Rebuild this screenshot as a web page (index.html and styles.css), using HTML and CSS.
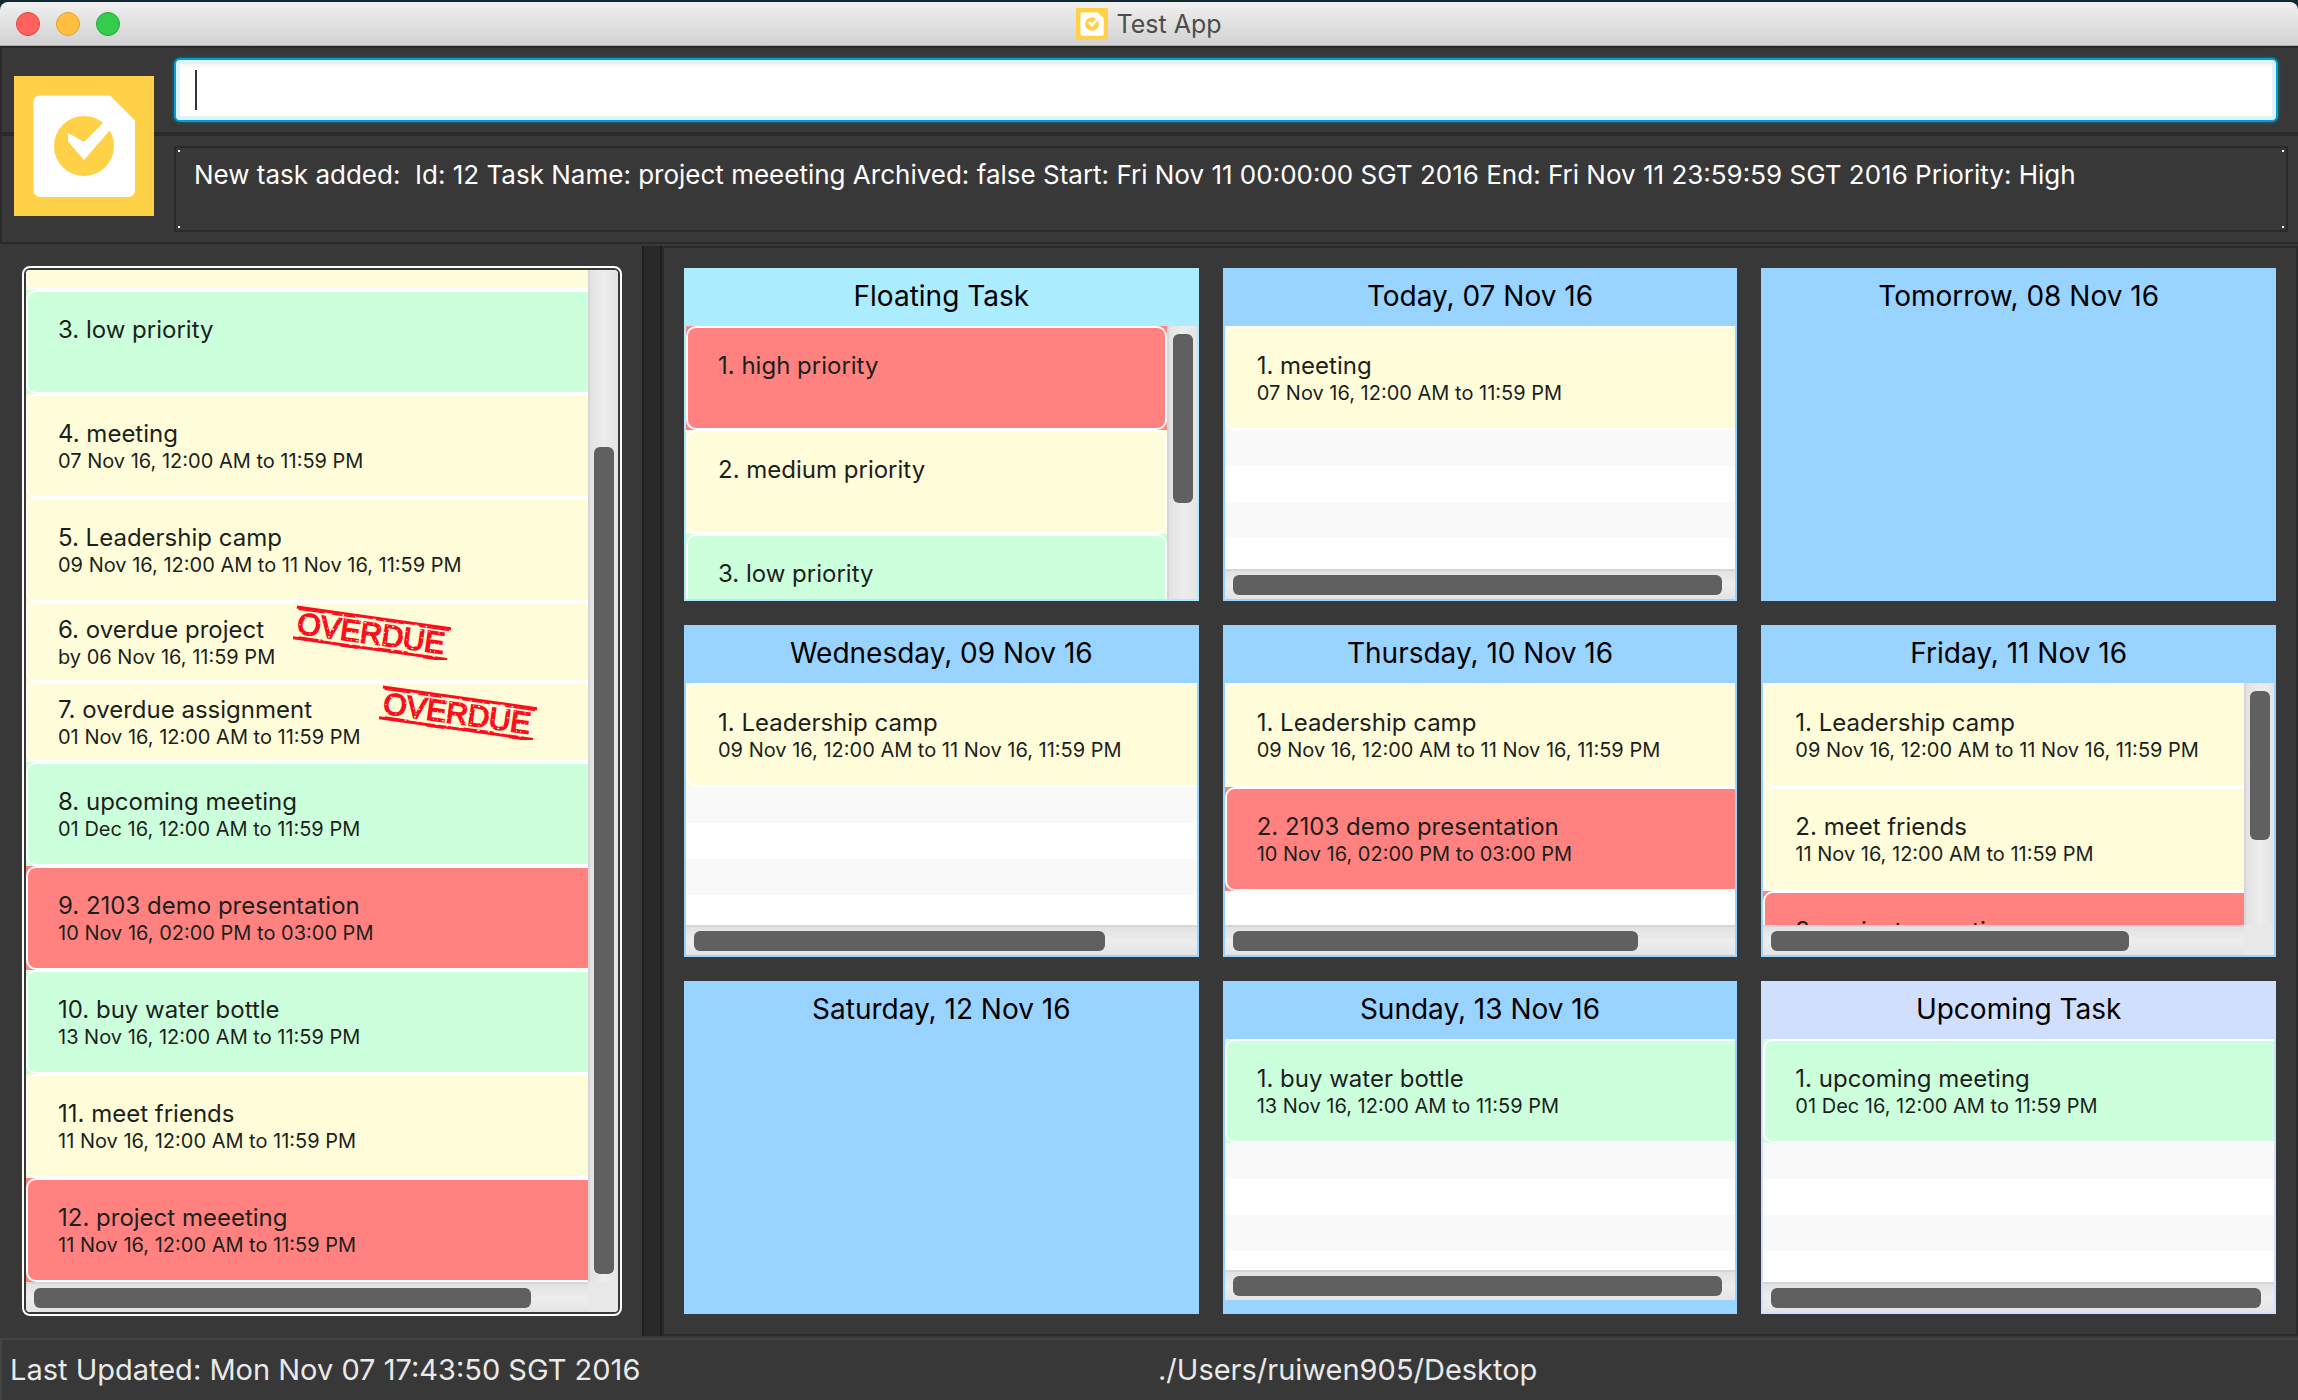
FILE: index.html
```html
<!DOCTYPE html>
<html lang="en">
<head>
<meta charset="utf-8">
<title>Test App</title>
<link rel="stylesheet" href="styles.css">
</head>
<body>
<svg class="defs" aria-hidden="true">
  <symbol id="logo" viewBox="0 0 140 140">
    <rect width="140" height="140" fill="#ffd147"/>
    <path fill="#fff" d="M26 19.5H96L121 44.5V113.500Q121 121 113.500 121H27Q19.500 121 19.500 113.500V26Q19.500 19.500 26 19.500Z"/>
    <circle cx="70" cy="70" r="30" fill="#ffd147"/>
    <path fill="#fff" d="M54 57 70 66 92 44 97 53 70 84 54 65.500Z"/>
  </symbol>
  <symbol id="stamp" viewBox="0 0 158 56">
    <g transform="rotate(8 4 2)" fill="none" stroke="#fb0d1b">
      <path d="M4 3H160" stroke-width="3"/>
      <path d="M6 5H32M40 5H64M84 4.500H112M128 5H158" stroke-width="1.500"/>
      <path d="M4 34H160" stroke-width="3"/>
      <path d="M10 32.500H34M52 35.500H70M90 32.500H120M136 35.500H159" stroke-width="1.500"/>
      <text x="7" y="29" font-family="Liberation Sans, Arial, sans-serif" font-size="30" fill="#fb0d1b" stroke-width="1.600">OVERDUE</text>
      <path stroke="#fffdd9" stroke-width="1.200" stroke-dasharray="1 4 2 7 1 9 1 3" d="M8 12H154M14 16H150M9 20H152M16 25H156M6 28H150M40 9H150"/>
      <path stroke="#fffdd9" stroke-width="1.200" stroke-dasharray="2 11 1 17 3 8" d="M50 4.500H140M30 32.500H150"/>
    </g>
  </symbol>
</svg>

<header class="titlebar">
  <div class="lights">
    <button class="light light-close" aria-label="Close"></button>
    <button class="light light-min" aria-label="Minimize"></button>
    <button class="light light-zoom" aria-label="Zoom"></button>
  </div>
  <h1 class="title"><svg class="title-icon" aria-hidden="true"><use href="#logo"/></svg>Test App</h1>
</header>

<section class="top">
  <svg class="logo" role="img" aria-label="Logo"><use href="#logo"/></svg>
  <div class="bar command-bar">
    <input class="command" type="text" aria-label="Command">
    <span class="caret"></span>
  </div>
  <div class="bar result-bar">
    <textarea class="result" readonly aria-label="Result">New task added:&nbsp; Id: 12 Task Name: project meeeting Archived: false Start: Fri Nov 11 00:00:00 SGT 2016 End: Fri Nov 11 23:59:59 SGT 2016 Priority: High</textarea>
  </div>
</section>

<main class="split">
  <section class="side">
    <div class="side-frame">
      <div class="scroller both">
        <ul class="list at-end">
          <li class="task medium"><div class="cell"></div></li>
          <li class="task low"><div class="cell"><div class="text"><p class="name">3. low priority</p><p class="when"></p></div></div></li>
          <li class="task medium"><div class="cell"><div class="text"><p class="name">4. meeting</p><p class="when">07 Nov 16, 12:00 AM to 11:59 PM</p></div></div></li>
          <li class="task medium"><div class="cell"><div class="text"><p class="name">5. Leadership camp</p><p class="when">09 Nov 16, 12:00 AM to 11 Nov 16, 11:59 PM</p></div></div></li>
          <li class="task medium overdue"><div class="cell"><div class="text"><p class="name">6. overdue project</p><p class="when">by 06 Nov 16, 11:59 PM</p></div><svg class="stamp"><use href="#stamp"/></svg></div></li>
          <li class="task medium overdue"><div class="cell"><div class="text"><p class="name">7. overdue assignment</p><p class="when">01 Nov 16, 12:00 AM to 11:59 PM</p></div><svg class="stamp"><use href="#stamp"/></svg></div></li>
          <li class="task low"><div class="cell"><div class="text"><p class="name">8. upcoming meeting</p><p class="when">01 Dec 16, 12:00 AM to 11:59 PM</p></div></div></li>
          <li class="task high"><div class="cell"><div class="text"><p class="name">9. 2103 demo presentation</p><p class="when">10 Nov 16, 02:00 PM to 03:00 PM</p></div></div></li>
          <li class="task low"><div class="cell"><div class="text"><p class="name">10. buy water bottle</p><p class="when">13 Nov 16, 12:00 AM to 11:59 PM</p></div></div></li>
          <li class="task medium"><div class="cell"><div class="text"><p class="name">11. meet friends</p><p class="when">11 Nov 16, 12:00 AM to 11:59 PM</p></div></div></li>
          <li class="task high"><div class="cell"><div class="text"><p class="name">12. project meeeting</p><p class="when">11 Nov 16, 12:00 AM to 11:59 PM</p></div></div></li>
        </ul>
        <div class="vbar end"><div class="thumb" style="height:83%"></div></div>
        <div class="hbar"><div class="thumb" style="width:91%"></div></div>
        <div class="corner"></div>
      </div>
    </div>
  </section>

  <div class="divider"></div>

  <section class="board">
    <article class="card floating">
      <h2 class="day">Floating Task</h2>
      <div class="scroller vertical">
        <ul class="list fit">
          <li class="task high"><div class="cell"><div class="text"><p class="name">1. high priority</p><p class="when"></p></div></div></li>
          <li class="task medium"><div class="cell"><div class="text"><p class="name">2. medium priority</p><p class="when"></p></div></div></li>
          <li class="task low"><div class="cell"><div class="text"><p class="name">3. low priority</p><p class="when"></p></div></div></li>
        </ul>
        <div class="vbar"><div class="thumb" style="height:66%"></div></div>
      </div>
    </article>

    <article class="card">
      <h2 class="day">Today, 07 Nov 16</h2>
      <div class="scroller horizontal">
        <ul class="list">
          <li class="task medium"><div class="cell"><div class="text"><p class="name">1. meeting</p><p class="when">07 Nov 16, 12:00 AM to 11:59 PM</p></div></div></li>
          <li class="stripes"></li>
        </ul>
        <div class="hbar"><div class="thumb" style="width:99%"></div></div>
      </div>
    </article>

    <article class="card">
      <h2 class="day">Tomorrow, 08 Nov 16</h2>
    </article>

    <article class="card">
      <h2 class="day">Wednesday, 09 Nov 16</h2>
      <div class="scroller horizontal">
        <ul class="list">
          <li class="task medium"><div class="cell"><div class="text"><p class="name">1. Leadership camp</p><p class="when">09 Nov 16, 12:00 AM to 11 Nov 16, 11:59 PM</p></div></div></li>
          <li class="stripes"></li>
        </ul>
        <div class="hbar"><div class="thumb" style="width:83%"></div></div>
      </div>
    </article>

    <article class="card">
      <h2 class="day">Thursday, 10 Nov 16</h2>
      <div class="scroller horizontal">
        <ul class="list">
          <li class="task medium"><div class="cell"><div class="text"><p class="name">1. Leadership camp</p><p class="when">09 Nov 16, 12:00 AM to 11 Nov 16, 11:59 PM</p></div></div></li>
          <li class="task high"><div class="cell"><div class="text"><p class="name">2. 2103 demo presentation</p><p class="when">10 Nov 16, 02:00 PM to 03:00 PM</p></div></div></li>
        </ul>
        <div class="hbar"><div class="thumb" style="width:82%"></div></div>
      </div>
    </article>

    <article class="card">
      <h2 class="day">Friday, 11 Nov 16</h2>
      <div class="scroller both">
        <ul class="list">
          <li class="task medium"><div class="cell"><div class="text"><p class="name">1. Leadership camp</p><p class="when">09 Nov 16, 12:00 AM to 11 Nov 16, 11:59 PM</p></div></div></li>
          <li class="task medium"><div class="cell"><div class="text"><p class="name">2. meet friends</p><p class="when">11 Nov 16, 12:00 AM to 11:59 PM</p></div></div></li>
          <li class="task high"><div class="cell"><div class="text"><p class="name">3. project meeeting</p><p class="when"></p></div></div></li>
        </ul>
        <div class="vbar"><div class="thumb" style="height:66%"></div></div>
        <div class="hbar"><div class="thumb" style="width:77%"></div></div>
        <div class="corner"></div>
      </div>
    </article>

    <article class="card">
      <h2 class="day">Saturday, 12 Nov 16</h2>
    </article>

    <article class="card roomy">
      <h2 class="day">Sunday, 13 Nov 16</h2>
      <div class="scroller horizontal">
        <ul class="list">
          <li class="task low"><div class="cell"><div class="text"><p class="name">1. buy water bottle</p><p class="when">13 Nov 16, 12:00 AM to 11:59 PM</p></div></div></li>
          <li class="stripes"></li>
        </ul>
        <div class="hbar"><div class="thumb" style="width:99%"></div></div>
      </div>
    </article>

    <article class="card upcoming">
      <h2 class="day">Upcoming Task</h2>
      <div class="scroller horizontal">
        <ul class="list">
          <li class="task low"><div class="cell"><div class="text"><p class="name">1. upcoming meeting</p><p class="when">01 Dec 16, 12:00 AM to 11:59 PM</p></div></div></li>
          <li class="stripes"></li>
        </ul>
        <div class="hbar"><div class="thumb" style="width:99%"></div></div>
      </div>
    </article>
  </section>
</main>

<footer class="status">
  <p class="status-cell">Last Updated: Mon Nov 07 17:43:50 SGT 2016</p>
  <p class="status-cell">./Users/ruiwen905/Desktop</p>
</footer>
</body>
</html>
```
FILE: styles.css
```css
:root {
  --panel: #383838;
  --line: #2a2a2a;
  --medium: #fffdd9;
  --low: #ccffdb;
  --high: #ff8280;
}

* { box-sizing: border-box; }

body {
  margin: 0;
  height: 100vh;
  padding-top: 2px;
  display: flex;
  flex-direction: column;
  overflow: hidden;
  background: #0d2a33;
  font-family: Inter, "Liberation Sans", sans-serif;
}

h1, h2, p, ul { margin: 0; padding: 0; font-weight: 400; list-style: none; }

.defs { position: absolute; width: 0; height: 0; }

/* Title bar */
.titlebar {
  flex: none;
  display: grid;
  grid-template-columns: 1fr auto 1fr;
  align-items: center;
  height: 44px;
  padding: 0 16px;
  border-bottom: 1px solid #a9a9a9;
  border-radius: 8px 8px 0 0;
  background: linear-gradient(#f0f0f0, #d2d2d2);
}
.lights { display: flex; gap: 16px; }
.light { width: 24px; height: 24px; padding: 0; border: 1px solid; border-radius: 50%; }
.light-close { background: #ff615c; border-color: #e2453f; }
.light-min { background: #ffbf41; border-color: #dfa033; }
.light-zoom { background: #35cb4b; border-color: #24a934; }
.title { display: flex; align-items: center; gap: 8px; font-size: 25px; line-height: 32px; color: #4c4c4c; }
.title-icon { width: 32px; height: 32px; }

/* Command box and result box */
.top {
  flex: none;
  position: relative;
  margin-bottom: 2px;
  background: var(--panel);
  box-shadow: 0 2px var(--panel);
}
.logo { position: absolute; z-index: 1; left: 14px; top: 30px; width: 140px; height: 140px; }
.bar { display: flex; border: 2px solid var(--line); border-right: 0; }
.command-bar { position: relative; padding: 10px 20px 10px 172px; }
.result-bar { padding: 10px 10px 10px 172px; }
.command {
  flex: 1;
  height: 64px;
  padding: 0 18px;
  border: 2px solid #039ed3;
  border-radius: 6px;
  outline: 0;
  background: #fff;
  box-shadow: inset 0 0 0 4px #ddf2f9, inset 0 8px 4px -2px #f4f4f4, 0 0 3px 1px #1c6077;
  font: 26px/34px Inter, "Liberation Sans", sans-serif;
}
.caret { position: absolute; left: 193px; top: 22px; width: 2px; height: 40px; background: #333; }
.result {
  flex: 1;
  height: 86px;
  padding: 10px 18px;
  border: 2px solid var(--line);
  outline: 0;
  resize: none;
  overflow: hidden;
  color: #fff;
  background:
    linear-gradient(#fff, #fff) left 2px top 2px / 2px 2px no-repeat,
    linear-gradient(#fff, #fff) right 2px top 2px / 2px 2px no-repeat,
    linear-gradient(#fff, #fff) left 2px bottom 2px / 2px 2px no-repeat,
    linear-gradient(#fff, #fff) right 2px bottom 2px / 2px 2px no-repeat,
    var(--panel);
  font: 26px/34px Inter, "Liberation Sans", sans-serif;
}

/* Split pane */
.split {
  flex: 1;
  min-height: 0;
  display: grid;
  grid-template-columns: 642fr 20px 1636fr;
  grid-template-rows: minmax(0, 1fr);
  background: var(--panel);
}
.side { padding: 20px 20px 20px 22px; min-width: 0; }
.side-frame { height: 100%; padding: 2px; border: 2px solid #fff; border-radius: 8px; }
.divider { border: solid #1f1f1f; border-width: 0 2px; background: #292929; }
.board {
  display: grid;
  grid-template-columns: repeat(3, minmax(0, 1fr));
  grid-template-rows: repeat(3, minmax(0, 1fr));
  gap: 24px;
  padding: 20px;
  border: 2px solid var(--line);
}

/* Day cards */
.card {
  --tint: #99d3ff;
  display: flex;
  flex-direction: column;
  padding: 0 2px 2px;
  background: var(--tint);
}
.floating { --tint: #abecff; }
.upcoming { --tint: #d1dfff; }
.roomy { padding-bottom: 14px; }
.day { flex: none; padding: 11px 0 13px; font-size: 28px; line-height: 34px; text-align: center; color: #000; }

/* Lists with their scroll bars */
.scroller { flex: 1; min-height: 0; display: grid; background: #fff; }
.side-frame .scroller { height: 100%; border-radius: 4px; overflow: hidden; }
.both { grid-template: minmax(0, 1fr) 30px / minmax(0, 1fr) 30px; }
.vertical { grid-template: minmax(0, 1fr) / minmax(0, 1fr) 30px; }
.horizontal { grid-template: minmax(0, 1fr) 30px / minmax(0, 1fr); }
.list { display: flex; flex-direction: column; min-height: 0; overflow: hidden; }
.at-end { justify-content: flex-end; }
.task { flex: none; width: calc(100% + 20px); height: 104px; }
.fit .task { width: 100%; }
.overdue { height: 80px; }
.medium { background: var(--medium); }
.low { background: var(--low); }
.high { background: var(--high); }
.cell {
  display: flex;
  align-items: center;
  height: 100%;
  padding-left: 30px;
  border: 2px solid #fff;
  border-radius: 10px;
}
.name { font-size: 24px; line-height: 30px; color: #1c1f1c; white-space: nowrap; }
.when { min-height: 24px; font-size: 20px; line-height: 24px; color: #1c1f1c; white-space: nowrap; }
.stamp { align-self: flex-start; width: 158px; height: 56px; margin-left: 18px; overflow: visible; }
.stripes { flex: 1; background: repeating-linear-gradient(#f9f9f9 0 36px, #fff 36px 72px); }

.hbar, .vbar { display: flex; min-width: 0; min-height: 0; }
.hbar {
  padding: 4px 8px;
  border-top: 2px solid #d6d6d6;
  background: linear-gradient(#e2e2e2, #ededed 50%, #e4e4e4);
}
.vbar {
  flex-direction: column;
  padding: 8px 4px;
  border-left: 2px solid #d6d6d6;
  background: linear-gradient(90deg, #e2e2e2, #ededed 50%, #e4e4e4);
}
.end { justify-content: flex-end; }
.thumb { border-radius: 6px; background: #606060; }
.corner { background: #e8e8e8; }

/* Status bar */
.status {
  flex: none;
  display: grid;
  grid-template-columns: 1fr 1fr;
  border: solid #444;
  border-width: 2px 0 0 2px;
  background: var(--panel);
  box-shadow: 0 -2px var(--panel);
  margin-top: 2px;
}
.status-cell { padding: 13px 8px; font-size: 29px; line-height: 34px; color: #e9e9e9; }
```
